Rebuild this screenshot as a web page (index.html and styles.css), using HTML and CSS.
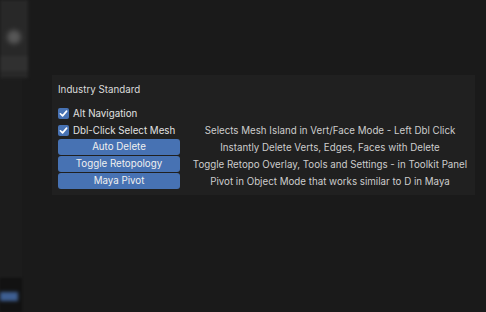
FILE: index.html
```html
<!DOCTYPE html>
<html lang="en">
<head>
    <meta charset="UTF-8">
    <title>Keymap Preferences</title>
    <link rel="stylesheet" href="styles.css">
</head>
<body>
    <div class="sidebar">
        <div class="side-top">
            <div class="side-knob"></div>
            <div class="side-bar"></div>
        </div>
        <div class="side-fill"></div>
        <div class="side-bottom">
            <div class="side-tab"></div>
        </div>
    </div>
    <div class="main">
        <div class="panel">
            <div class="panel-title">Industry Standard</div>
            <div class="rows">
                <label class="check"><span class="box"><svg viewBox="0 0 12 12"><path d="M2.6 6.3 L5 8.6 L9.4 3.4" /></svg></span>Alt Navigation</label>
                <div class="desc"></div>

                <label class="check"><span class="box"><svg viewBox="0 0 12 12"><path d="M2.6 6.3 L5 8.6 L9.4 3.4" /></svg></span>Dbl-Click Select Mesh</label>
                <div class="desc">Selects Mesh Island in Vert/Face Mode - Left Dbl Click</div>

                <button class="btn">Auto Delete</button>
                <div class="desc">Instantly Delete Verts, Edges, Faces with Delete</div>

                <button class="btn">Toggle Retopology</button>
                <div class="desc">Toggle Retopo Overlay, Tools and Settings - in Toolkit Panel</div>

                <button class="btn">Maya Pivot</button>
                <div class="desc">Pivot in Object Mode that works similar to D in Maya</div>
            </div>
        </div>
    </div>
</body>
</html>
```
FILE: styles.css
```css
body {
    margin: 0;
    height: 312px;
    overflow: hidden;
    display: flex;
    background: #1a1a1a;
    font-family: 'Inter', 'DejaVu Sans', sans-serif;
    font-size: 9.75px;
    color: #d4d4d4;
}
.sidebar {
    width: 28px;
    display: flex;
    flex-direction: column;
}
.side-top {
    height: 78px;
    background: #282828;
    filter: blur(1.5px);
    display: flex;
    flex-direction: column;
    align-items: center;
}
.side-knob {
    width: 14px;
    height: 14px;
    margin-top: 30px;
    border-radius: 50%;
    background: #575757;
    filter: blur(2px);
}
.side-bar {
    align-self: stretch;
    height: 15px;
    margin-top: 12px;
    background: #303030;
}
.side-fill {
    flex: 1;
    width: 22px;
    background: #1c1c1c;
}
.side-bottom {
    width: 22px;
    height: 34px;
    background: #121212;
    filter: blur(1px);
}
.side-tab {
    width: 18px;
    height: 9px;
    margin-top: 14px;
    background: #3e5f93;
    filter: blur(1.5px);
}
.main {
    flex: 1;
    padding: 75px 11px 0 24px;
}
.panel {
    background: #202020;
    padding: 7px 0 5px 6px;
}
.panel-title {
    height: 16px;
    line-height: 16px;
    margin-bottom: 7px;
    color: #dcdcdc;
}
.rows {
    display: grid;
    grid-template-columns: 122px 1fr;
    grid-auto-rows: 17px;
    column-gap: 5px;
}
.check {
    display: flex;
    align-items: center;
    color: #e2e2e2;
    white-space: nowrap;
}
.box {
    width: 11px;
    height: 11px;
    margin-right: 4px;
    border-radius: 2px;
    background: #4772b3;
    display: flex;
}
.box svg {
    width: 11px;
    height: 11px;
    fill: none;
    stroke: #fff;
    stroke-width: 1.8;
    stroke-linecap: round;
    stroke-linejoin: round;
}
.btn {
    height: 16px;
    padding: 0;
    border: none;
    border-radius: 3px;
    background: #4772b3;
    color: #f0f0f0;
    font-family: inherit;
    font-size: inherit;
    line-height: 16px;
}
.desc {
    text-align: center;
    line-height: 17px;
    white-space: nowrap;
    color: #cdcdcd;
}
```
